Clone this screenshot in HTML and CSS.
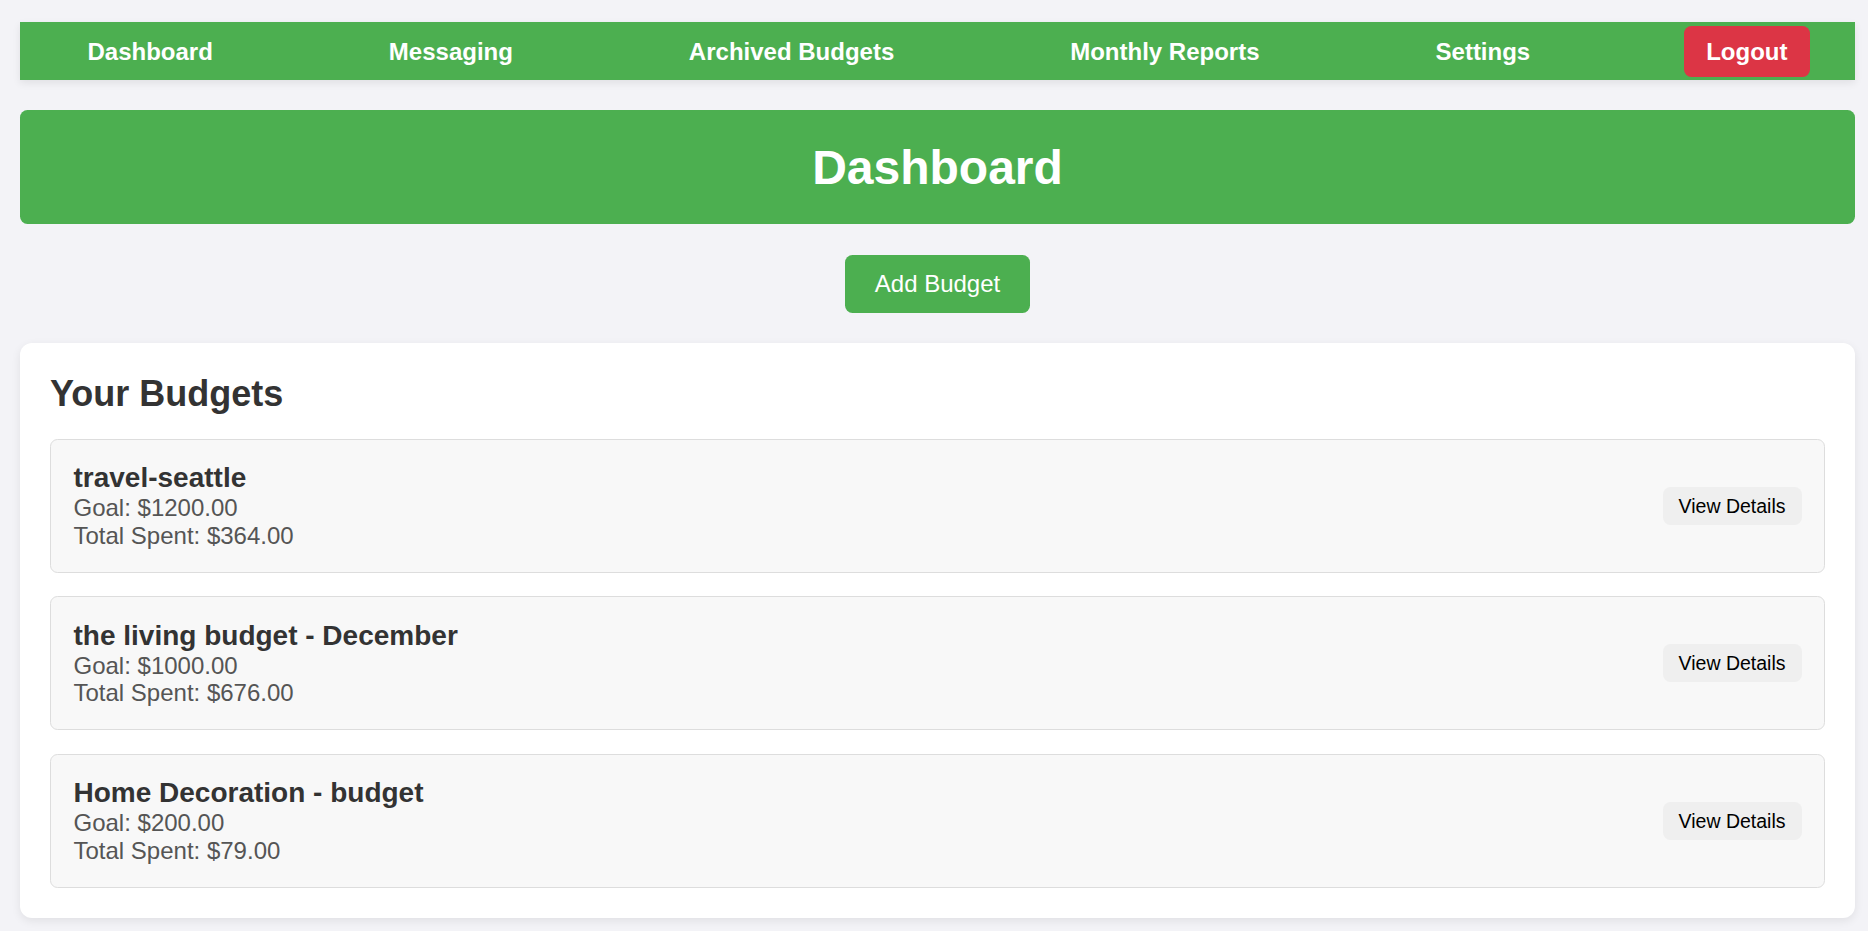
FILE: index.html
```html
<!DOCTYPE html>
<html lang="en">
<head>
<meta charset="utf-8">
<title>Dashboard</title>
<link rel="stylesheet" href="styles.css">
</head>
<body>
<nav class="navbar">
  <a class="nav-link" href="#">Dashboard</a>
  <a class="nav-link" href="#">Messaging</a>
  <a class="nav-link" href="#">Archived Budgets</a>
  <a class="nav-link" href="#">Monthly Reports</a>
  <a class="nav-link" href="#">Settings</a>
  <a class="nav-link logout" href="#">Logout</a>
</nav>
<header class="page-header">
  <h1>Dashboard</h1>
</header>
<div class="actions">
  <button class="add-btn">Add Budget</button>
</div>
<section class="card">
  <h2>Your Budgets</h2>
  <div class="budget">
    <div class="budget-info">
      <h3>travel-seattle</h3>
      <p>Goal: $1200.00</p>
      <p>Total Spent: $364.00</p>
    </div>
    <button class="details-btn">View Details</button>
  </div>
  <div class="budget">
    <div class="budget-info">
      <h3>the living budget - December</h3>
      <p>Goal: $1000.00</p>
      <p>Total Spent: $676.00</p>
    </div>
    <button class="details-btn">View Details</button>
  </div>
  <div class="budget last">
    <div class="budget-info">
      <h3>Home Decoration - budget</h3>
      <p>Goal: $200.00</p>
      <p>Total Spent: $79.00</p>
    </div>
    <button class="details-btn">View Details</button>
  </div>
</section>
</body>
</html>
```

FILE: styles.css
```css
* { box-sizing: border-box; }

html, body {
  margin: 0;
}

body {
  background: #f3f3f7;
  font-family: "Liberation Sans", Arial, sans-serif;
  font-size: 24px;
  color: #333;
  padding: 22px 13px 20px 20px;
}

.navbar {
  display: flex;
  justify-content: space-between;
  align-items: center;
  background: #4caf50;
  height: 58px;
  padding: 0 45px;
  box-shadow: 0 3px 8px rgba(0, 0, 0, 0.08);
}

.nav-link {
  color: #fff;
  font-weight: bold;
  font-size: 24px;
  text-decoration: none;
  padding: 12px 22.5px;
  line-height: 27px;
  border-radius: 7.5px;
}

.logout {
  background: #dc3545;
}

.page-header {
  margin-top: 30px;
  background: #4caf50;
  border-radius: 7.5px;
  height: 114px;
  display: flex;
  align-items: center;
  justify-content: center;
}

.page-header h1 {
  margin: 0;
  color: #fff;
  font-size: 48px;
  line-height: 55px;
}

.actions {
  display: flex;
  justify-content: center;
  padding: 31px 0 30px;
}

.add-btn {
  font-family: "Liberation Sans", Arial, sans-serif;
  background: #4caf50;
  color: #fff;
  border: none;
  border-radius: 7.5px;
  font-size: 24px;
  line-height: 28px;
  height: 58px;
  padding: 0 29.5px;
}

.card {
  background: #fff;
  border-radius: 12px;
  padding: 30px;
  box-shadow: 0 3px 10px rgba(0, 0, 0, 0.08);
}

.card h2 {
  margin: 0 0 24.5px;
  font-size: 36px;
  line-height: 41px;
  color: #333;
}

.budget {
  display: flex;
  justify-content: space-between;
  align-items: center;
  background: #f8f8f8;
  border: 1px solid #ddd;
  border-radius: 7.5px;
  padding: 22.5px;
  margin-bottom: 23.5px;
}

.budget.last {
  margin-bottom: 0;
}

.budget-info h3 {
  margin: 0;
  font-size: 28px;
  line-height: 32px;
  color: #333;
}

.budget-info p {
  margin: 0;
  font-size: 24px;
  line-height: 27.6px;
  color: #555;
}

.details-btn {
  font-family: "Liberation Sans", Arial, sans-serif;
  font-size: 19.5px;
  line-height: 22px;
  background: #efefef;
  color: #000;
  border: none;
  border-radius: 7.5px;
  padding: 8px 16px;
  height: 38px;
}
```
